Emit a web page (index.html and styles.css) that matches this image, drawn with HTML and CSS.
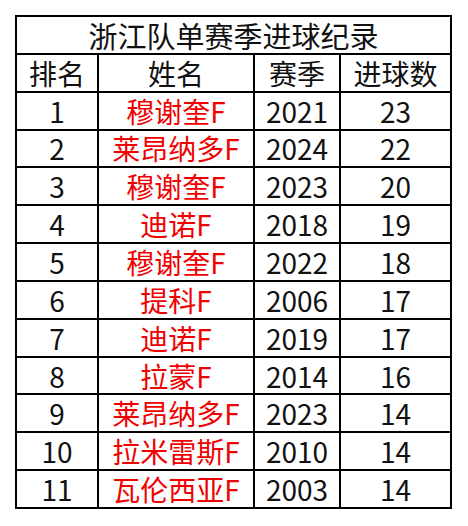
FILE: index.html
```html
<!DOCTYPE html>
<html lang="zh">
<head>
<meta charset="utf-8">
<link rel="stylesheet" href="styles.css">
</head>
<body>
<table class="records">
  <colgroup>
    <col class="c-rank"><col class="c-name"><col class="c-season"><col class="c-goals">
  </colgroup>
  <tr><td class="title" colspan="4">浙江队单赛季进球纪录</td></tr>
  <tr><td>排名</td><td>姓名</td><td>赛季</td><td>进球数</td></tr>
  <tr><td>1</td><td class="name">穆谢奎F</td><td>2021</td><td>23</td></tr>
  <tr><td>2</td><td class="name">莱昂纳多F</td><td>2024</td><td>22</td></tr>
  <tr><td>3</td><td class="name">穆谢奎F</td><td>2023</td><td>20</td></tr>
  <tr><td>4</td><td class="name">迪诺F</td><td>2018</td><td>19</td></tr>
  <tr><td>5</td><td class="name">穆谢奎F</td><td>2022</td><td>18</td></tr>
  <tr><td>6</td><td class="name">提科F</td><td>2006</td><td>17</td></tr>
  <tr><td>7</td><td class="name">迪诺F</td><td>2019</td><td>17</td></tr>
  <tr><td>8</td><td class="name">拉蒙F</td><td>2014</td><td>16</td></tr>
  <tr><td>9</td><td class="name">莱昂纳多F</td><td>2023</td><td>14</td></tr>
  <tr><td>10</td><td class="name">拉米雷斯F</td><td>2010</td><td>14</td></tr>
  <tr><td>11</td><td class="name">瓦伦西亚F</td><td>2003</td><td>14</td></tr>
</table>
</body>
</html>
```
FILE: styles.css
```css
html, body {
  margin: 0;
  background: #ffffff;
}
body {
  padding: 15px 0 0 15px;
  font-family: "Noto Sans CJK SC", "Noto Sans", sans-serif;
}
.records {
  border-collapse: collapse;
  table-layout: fixed;
  width: 437px;
  border: 2px solid #000;
}
.c-rank { width: 82px; }
.c-name { width: 156px; }
.c-season { width: 86px; }
.c-goals { width: 111px; }
.records tr {
  height: 37.85px;
}
.records td {
  border: 2px solid #000;
  padding: 0;
  text-align: center;
  vertical-align: middle;
  font-size: 28px;
  font-weight: 400;
  line-height: 32px;
  color: #111;
  white-space: nowrap;
}
.records td.name {
  color: #f00000;
}
.records td.title {
  font-size: 29px;
  line-height: 32px;
}
```
